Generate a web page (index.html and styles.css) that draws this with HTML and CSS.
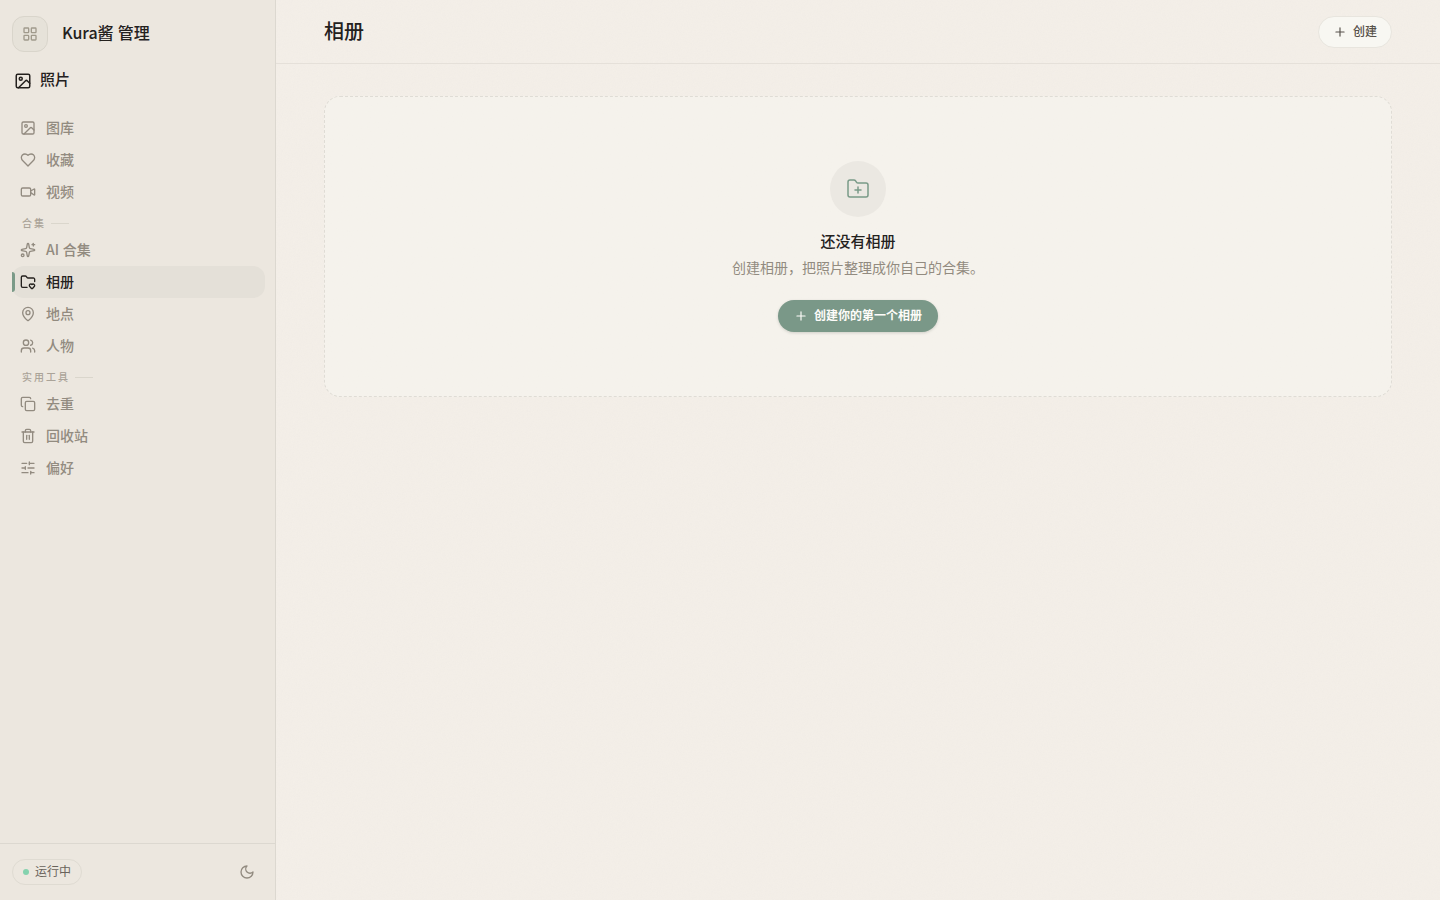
FILE: index.html
```html
<!DOCTYPE html>
<html lang="zh-CN">
<head>
<meta charset="utf-8">
<meta name="viewport" content="width=device-width, initial-scale=1">
<title>相册</title>
<link rel="stylesheet" href="styles.css">
</head>
<body>
<div class="app">
  <aside class="sidebar">
    <header class="brand">
      <button class="brand-button" type="button" aria-label="应用">
        <svg class="icon" viewBox="0 0 24 24"><rect x="3" y="3" width="7" height="7" rx="1"/><rect x="14" y="3" width="7" height="7" rx="1"/><rect x="14" y="14" width="7" height="7" rx="1"/><rect x="3" y="14" width="7" height="7" rx="1"/></svg>
      </button>
      <span class="brand-name"><span class="latin">Kura</span>酱 管理</span>
    </header>
    <div class="section-title">
      <svg class="icon icon-medium" viewBox="0 0 24 24"><rect x="3" y="3" width="18" height="18" rx="2"/><circle cx="9" cy="9" r="2"/><path d="m21 15-3.086-3.086a2 2 0 0 0-2.828 0L6 21"/></svg>
      <span class="section-name">照片</span>
    </div>
    <nav class="nav">
      <a class="nav-item" href="#"><svg class="icon" viewBox="0 0 24 24"><rect x="3" y="3" width="18" height="18" rx="2"/><circle cx="9" cy="9" r="2"/><path d="m21 15-3.086-3.086a2 2 0 0 0-2.828 0L6 21"/></svg>图库</a>
      <a class="nav-item" href="#"><svg class="icon" viewBox="0 0 24 24"><path d="M19 14c1.49-1.46 3-3.21 3-5.5A5.5 5.5 0 0 0 16.5 3c-1.76 0-3 .5-4.5 2-1.5-1.5-2.74-2-4.5-2A5.5 5.5 0 0 0 2 8.5c0 2.3 1.5 4.05 3 5.5l7 7Z"/></svg>收藏</a>
      <a class="nav-item" href="#"><svg class="icon" viewBox="0 0 24 24"><path d="m16 13 5.223 3.482a.5.5 0 0 0 .777-.416V7.87a.5.5 0 0 0-.752-.432L16 10.5"/><rect x="2" y="6" width="14" height="12" rx="2"/></svg>视频</a>
      <h2 class="nav-label">合集</h2>
      <a class="nav-item" href="#"><svg class="icon" viewBox="0 0 24 24"><path d="M11.017 2.814a1 1 0 0 1 1.966 0l1.051 5.558a2 2 0 0 0 1.594 1.594l5.558 1.051a1 1 0 0 1 0 1.966l-5.558 1.051a2 2 0 0 0-1.594 1.594l-1.051 5.558a1 1 0 0 1-1.966 0l-1.051-5.558a2 2 0 0 0-1.594-1.594l-5.558-1.051a1 1 0 0 1 0-1.966l5.558-1.051a2 2 0 0 0 1.594-1.594z"/><path d="M20 2v4"/><path d="M22 4h-4"/><circle cx="4" cy="20" r="2"/></svg><span><span class="latin">AI</span> 合集</span></a>
      <a class="nav-item active" href="#" aria-current="page"><svg class="icon" viewBox="0 0 24 24"><path d="M10.638 20H4a2 2 0 0 1-2-2V5a2 2 0 0 1 2-2h3.9a2 2 0 0 1 1.69.9l.81 1.2a2 2 0 0 0 1.67.9H20a2 2 0 0 1 2 2v3.417"/><path d="M14.62 18.8A2.25 2.25 0 1 1 18 15.836a2.25 2.25 0 1 1 3.38 2.966l-2.626 2.856a.998.998 0 0 1-1.507 0z"/></svg>相册</a>
      <a class="nav-item" href="#"><svg class="icon" viewBox="0 0 24 24"><path d="M20 10c0 4.993-5.539 10.193-7.399 11.799a1 1 0 0 1-1.202 0C9.539 20.193 4 14.993 4 10a8 8 0 0 1 16 0"/><circle cx="12" cy="10" r="3"/></svg>地点</a>
      <a class="nav-item" href="#"><svg class="icon" viewBox="0 0 24 24"><path d="M16 21v-2a4 4 0 0 0-4-4H6a4 4 0 0 0-4 4v2"/><circle cx="9" cy="7" r="4"/><path d="M22 21v-2a4 4 0 0 0-3-3.87"/><path d="M16 3.13a4 4 0 0 1 0 7.75"/></svg>人物</a>
      <h2 class="nav-label">实用工具</h2>
      <a class="nav-item" href="#"><svg class="icon" viewBox="0 0 24 24"><rect x="8" y="8" width="14" height="14" rx="2"/><path d="M4 16c-1.1 0-2-.9-2-2V4c0-1.1.9-2 2-2h10c1.1 0 2 .9 2 2"/></svg>去重</a>
      <a class="nav-item" href="#"><svg class="icon" viewBox="0 0 24 24"><path d="M3 6h18"/><path d="M19 6v14a2 2 0 0 1-2 2H7a2 2 0 0 1-2-2V6"/><path d="M8 6V4a2 2 0 0 1 2-2h4a2 2 0 0 1 2 2v2"/><path d="M10 11v6"/><path d="M14 11v6"/></svg>回收站</a>
      <a class="nav-item" href="#"><svg class="icon" viewBox="0 0 24 24"><path d="M21 5h-7"/><path d="M10 5H3"/><path d="M21 12h-9"/><path d="M8 12H3"/><path d="M21 19h-5"/><path d="M12 19H3"/><path d="M14 3v4"/><path d="M8 10v4"/><path d="M16 17v4"/></svg>偏好</a>
    </nav>
    <footer class="sidebar-footer">
      <span class="status"><span class="status-dot"></span>运行中</span>
      <button class="theme-button" type="button" aria-label="切换主题"><svg class="icon" viewBox="0 0 24 24"><path d="M12 3a6 6 0 0 0 9 9 9 9 0 1 1-9-9"/></svg></button>
    </footer>
  </aside>
  <main class="main">
    <header class="topbar">
      <h1 class="page-title">相册</h1>
      <button class="button button-light" type="button"><svg class="icon icon-small" viewBox="0 0 24 24"><path d="M5 12h14"/><path d="M12 5v14"/></svg>创建</button>
    </header>
    <section class="content">
      <div class="empty">
        <span class="empty-badge"><svg class="icon icon-large" viewBox="0 0 24 24"><path d="M12 10v6"/><path d="M9 13h6"/><path d="M20 20a2 2 0 0 0 2-2V8a2 2 0 0 0-2-2h-7.900a2 2 0 0 1-1.690-.9L9.600 3.900A2 2 0 0 0 7.930 3H4a2 2 0 0 0-2 2v13a2 2 0 0 0 2 2Z"/></svg></span>
        <h2 class="empty-title">还没有相册</h2>
        <p class="empty-text">创建相册，把照片整理成你自己的合集。</p>
        <button class="button button-primary" type="button"><svg class="icon icon-small" viewBox="0 0 24 24"><path d="M5 12h14"/><path d="M12 5v14"/></svg>创建你的第一个相册</button>
      </div>
    </section>
  </main>
</div>
</body>
</html>
```
FILE: styles.css
```css
* {
  box-sizing: border-box;
}

body {
  margin: 0;
  color: #24211e;
  background-color: #f4efe8;
  background-image: url("data:image/svg+xml,%3Csvg xmlns='http://www.w3.org/2000/svg' width='180' height='180'%3E%3Cfilter id='n'%3E%3CfeTurbulence type='fractalNoise' baseFrequency='.8' numOctaves='2' stitchTiles='stitch'/%3E%3CfeColorMatrix type='saturate' values='0'/%3E%3C/filter%3E%3Crect width='180' height='180' filter='url(%23n)' opacity='.04'/%3E%3C/svg%3E");
  font-family: "Open Sans", "Noto Sans CJK SC", sans-serif;
  font-size: 14px;
  line-height: 20px;
}

h1,
h2,
p {
  margin: 0;
}

button {
  font: inherit;
  color: inherit;
  cursor: pointer;
}

.latin {
  font-family: "Noto Sans CJK SC", sans-serif;
  line-height: 1;
}

.app {
  display: grid;
  grid-template-columns: 276px 1fr;
  min-height: 100vh;
}

.icon {
  width: 16px;
  height: 16px;
  flex: none;
  fill: none;
  stroke: currentColor;
  stroke-width: 2;
  stroke-linecap: round;
  stroke-linejoin: round;
}

.icon-small {
  width: 14px;
  height: 14px;
}

.icon-medium {
  width: 18px;
  height: 18px;
}

.icon-large {
  width: 24px;
  height: 24px;
  stroke-width: 1.5;
}

.sidebar {
  display: flex;
  flex-direction: column;
  background: #ece7df;
  border-right: 1px solid #dcd8d0;
}

.brand {
  display: flex;
  align-items: center;
  gap: 14px;
  padding: 16px 12px 0;
}

.brand-button {
  display: grid;
  place-items: center;
  width: 36px;
  height: 36px;
  padding: 0;
  color: #a09a8c;
  background: #e6e2d9;
  border: 1px solid #d9d5cb;
  border-radius: 12px;
}

.brand-name {
  padding-bottom: 2px;
  font-size: 16px;
  font-weight: 500;
  line-height: 24px;
}

.section-title {
  display: flex;
  align-items: center;
  gap: 8px;
  padding: 15px 14px 0;
}

.section-title .icon {
  margin-top: 2px;
}

.section-name {
  padding-bottom: 2px;
  font-size: 15px;
  font-weight: 500;
  line-height: 24px;
}

.nav {
  flex: 1;
  padding: 19px 10px 0 12px;
}

.nav-item {
  position: relative;
  display: flex;
  align-items: center;
  gap: 10px;
  height: 32px;
  padding: 0 8px;
  color: #928b80;
  font-weight: 500;
  text-decoration: none;
  border-radius: 12px;
}

.nav-item.active {
  color: #24211e;
  background: #e4e0d8;
}

.nav-item.active::before {
  content: "";
  position: absolute;
  left: 0;
  top: 6px;
  width: 3px;
  height: 20px;
  background: #7a9a88;
  border-radius: 0 4px 4px 0;
}

.nav-label {
  display: flex;
  align-items: center;
  gap: 5px;
  height: 26px;
  padding: 6px 10px 2px;
  color: #aaa398;
  font-size: 10px;
  font-weight: 500;
  line-height: 16px;
  letter-spacing: 2px;
}

.nav-label::after {
  content: "";
  width: 18px;
  height: 1px;
  background: #dad6cc;
}

.sidebar-footer {
  display: flex;
  align-items: center;
  justify-content: space-between;
  height: 57px;
  padding: 0 12px;
  border-top: 1px solid #dcd8d0;
}

.status {
  display: flex;
  align-items: center;
  gap: 6px;
  height: 26px;
  padding: 0 10px;
  color: #69635b;
  font-size: 12px;
  border: 1px solid #dfdbd2;
  border-radius: 13px;
}

.status-dot {
  width: 6px;
  height: 6px;
  background: #84d2ae;
  border-radius: 50%;
}

.theme-button {
  display: grid;
  place-items: center;
  width: 32px;
  height: 32px;
  padding: 0;
  color: #928b80;
  background: none;
  border: 0;
}

.main {
  min-width: 0;
}

.topbar {
  display: flex;
  align-items: center;
  justify-content: space-between;
  height: 64px;
  padding: 0 48px;
  border-bottom: 1px solid #e5e0d9;
}

.page-title {
  font-size: 20px;
  font-weight: 500;
  line-height: 28px;
}

.button {
  display: inline-flex;
  align-items: center;
  justify-content: center;
  gap: 6px;
  height: 32px;
  font-size: 12px;
  line-height: 16px;
  border-radius: 16px;
}

.button-light {
  padding: 0 14px;
  color: #57514a;
  background: #f8f7f2;
  border: 1px solid #e8e5de;
  font-weight: 500;
}

.button-primary {
  padding: 0 16px;
  color: #fdfcf9;
  background: #7a9888;
  border: 0;
  box-shadow: 0 1px 3px rgb(60 70 60 / 20%);
  font-weight: 600;
}

.content {
  padding: 32px 48px;
}

.empty {
  display: flex;
  flex-direction: column;
  align-items: center;
  padding: 64px 24px;
  background: rgb(246 245 238 / 65%);
  border: 1px dashed #dfdcd5;
  border-radius: 16px;
}

.empty-badge {
  display: grid;
  place-items: center;
  width: 56px;
  height: 56px;
  color: #7a9a88;
  background: #ebe8e2;
  border-radius: 50%;
}

.empty-title {
  margin-top: 12px;
  font-size: 15px;
  font-weight: 500;
  line-height: 24px;
}

.empty-text {
  margin: 5px 0 22px;
  color: #928b80;
}
```
